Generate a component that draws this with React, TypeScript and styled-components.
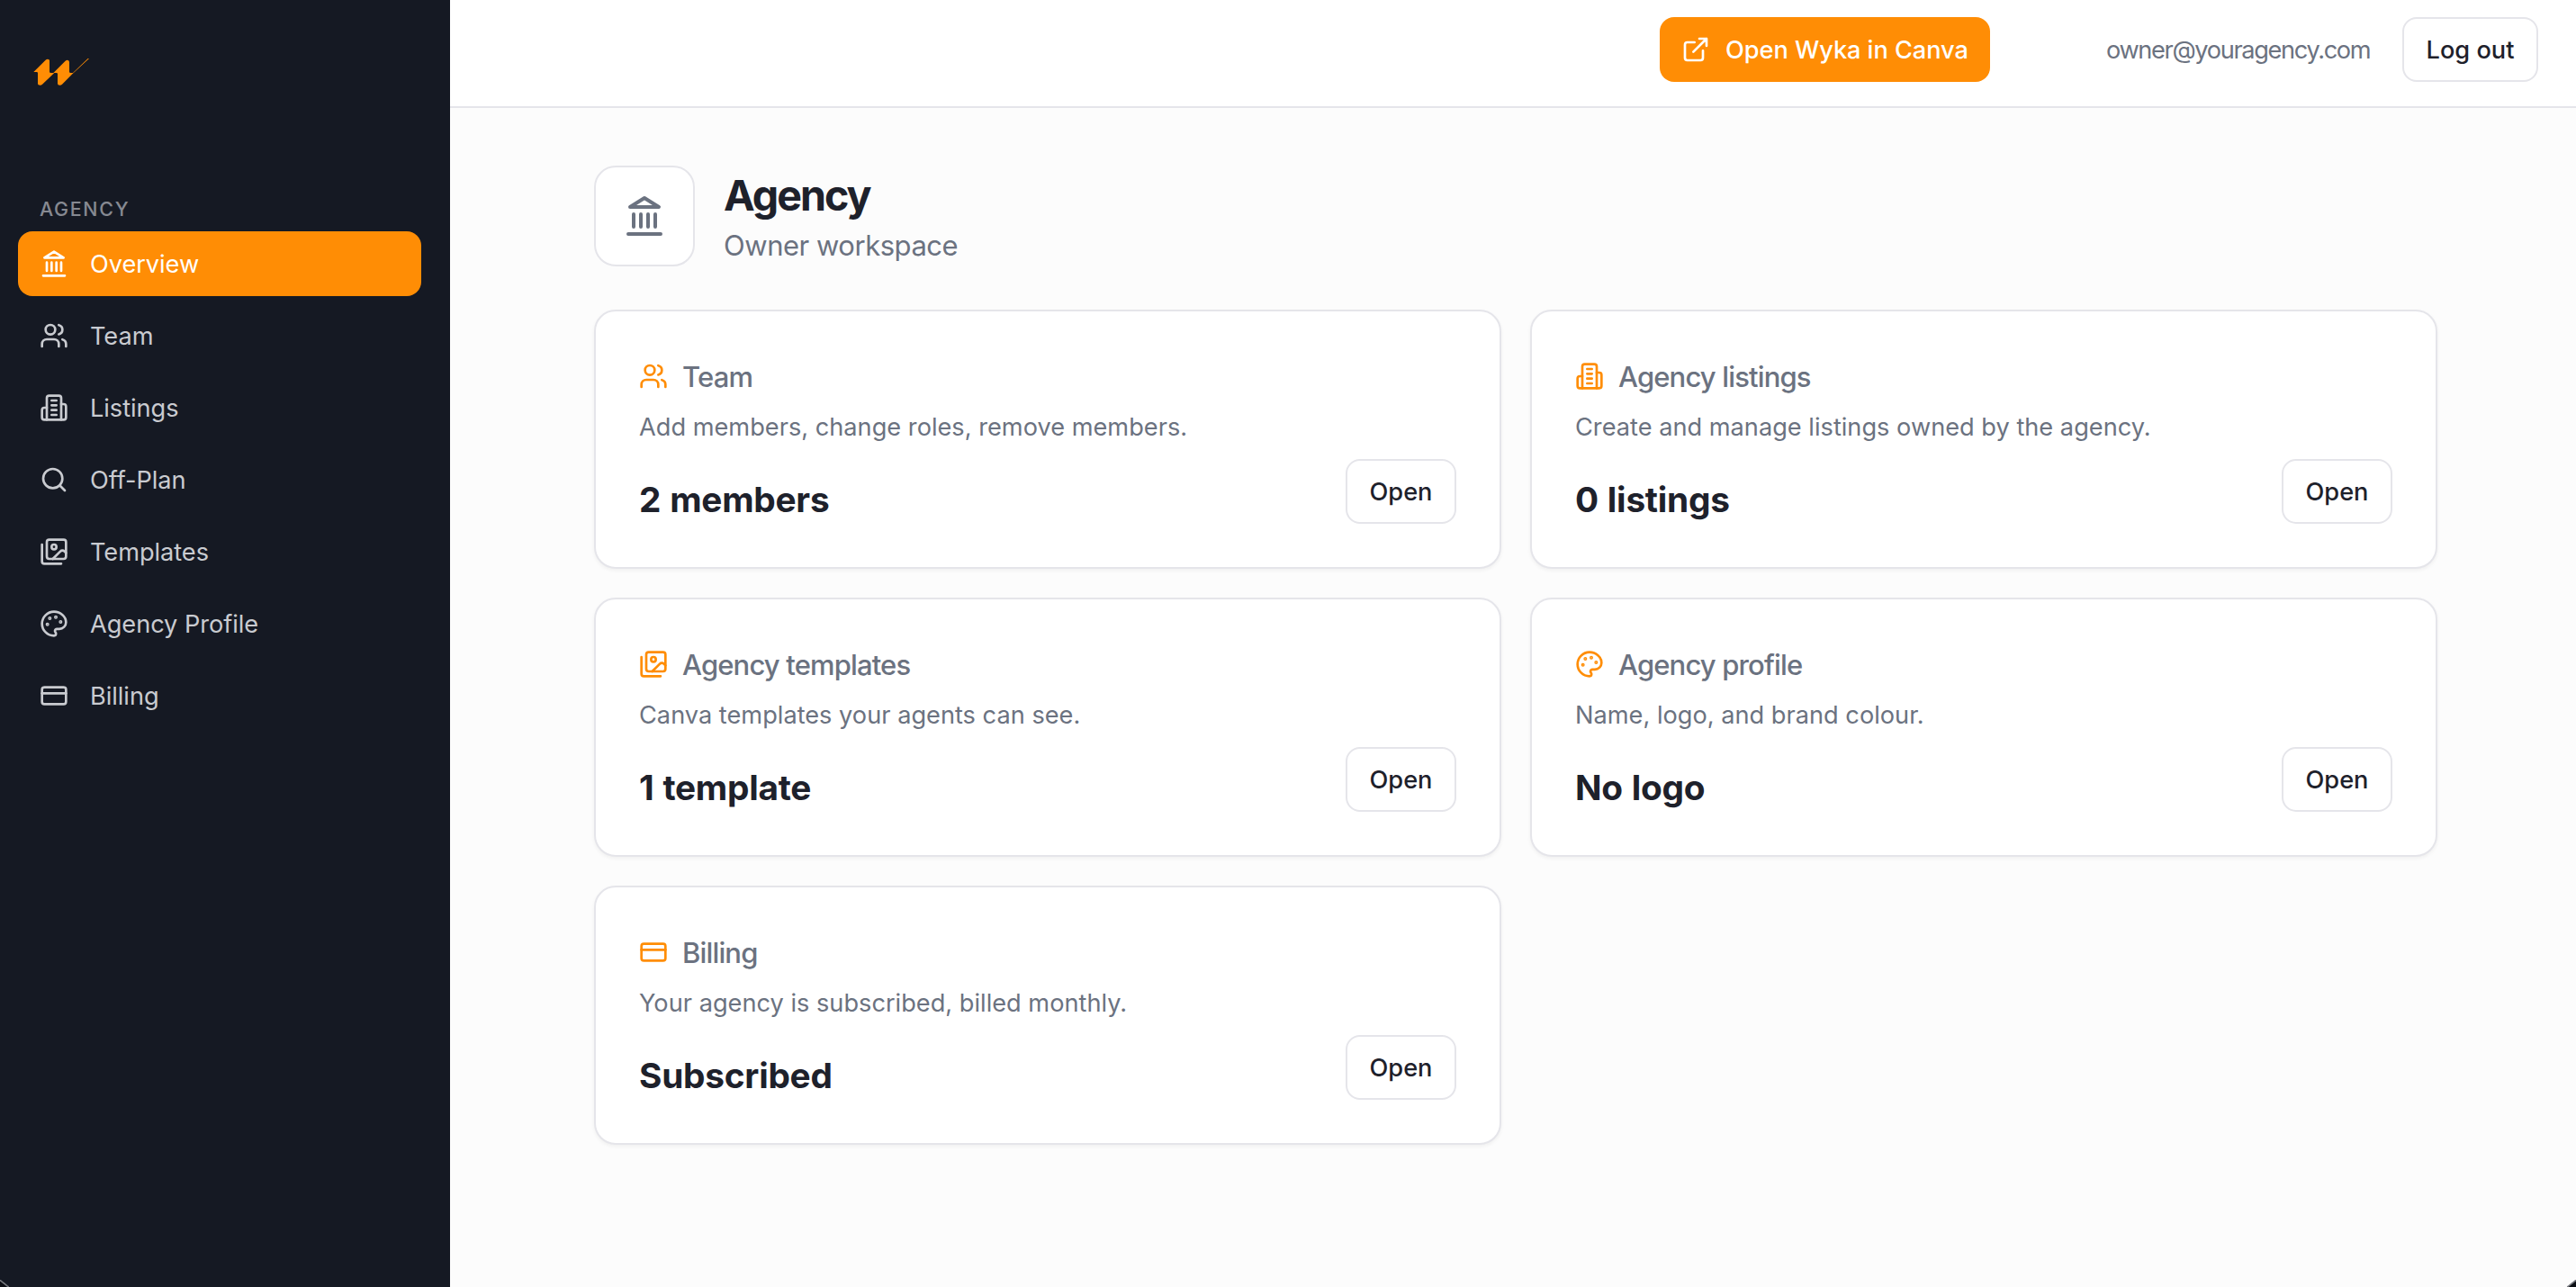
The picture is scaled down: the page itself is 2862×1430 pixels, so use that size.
import React from "react";
import styled, { createGlobalStyle } from "styled-components";

const c = {
  navy: "#151923",
  orange: "#ff8d05",
  ink: "#1e212b",
  muted: "#6b7280",
  line: "#e5e5ea",
  page: "#fcfcfc",
};

const GlobalStyle = createGlobalStyle`
  *, *::before, *::after { box-sizing: border-box; }
  body { margin: 0; background: ${c.page}; font-family: Inter, "Liberation Sans", sans-serif; color: ${c.ink}; }
  h1, h2, p { margin: 0; }
  button { font-family: inherit; }
`;

const Shell = styled.div`
  position: relative;
  display: flex;
  width: 100%;
  height: 100vh;
  overflow: hidden;
`;

const WindowCorner = styled.div<{ $side: "left" | "right" }>`
  position: absolute;
  bottom: 0;
  ${(p) => p.$side}: 0;
  width: 10px;
  height: 8px;
  background: linear-gradient(
    to top ${(p) => (p.$side === "left" ? "right" : "left")},
    #0c0e14 38%,
    #74767c 44%,
    #74767c 50%,
    transparent 58%
  );
`;

const Sidebar = styled.aside`
  flex: none;
  width: 500px;
  padding: 64px 32px 0 20px;
  background: ${c.navy};
`;

const Logo = styled.svg`
  display: block;
  width: 64px;
  height: 32px;
  margin-left: 16px;
`;

const GroupLabel = styled.div`
  margin: 120px 0 9px 24px;
  height: 32px;
  line-height: 32px;
  font-size: 21.4px;
  font-weight: 500;
  letter-spacing: 1.7px;
  color: #868991;
`;

const Nav = styled.nav`
  display: flex;
  flex-direction: column;
  gap: 8px;
`;

const Label = styled.span`
  padding-top: 1px;
  line-height: 33px;
`;

const NavItem = styled.a<{ $active?: boolean }>`
  display: flex;
  align-items: center;
  gap: 24px;
  height: 72px;
  padding: 0 24px;
  border-radius: 16px;
  font-size: 27.2px;
  letter-spacing: -0.05px;
  color: ${(p) => (p.$active ? "#fff" : "#c9cbd0")};
  background: ${(p) => (p.$active ? c.orange : "transparent")};
`;

const Glyph = styled.svg<{ $size?: number; $color?: string }>`
  flex: none;
  width: ${(p) => p.$size ?? 32}px;
  height: ${(p) => p.$size ?? 32}px;
  fill: none;
  color: ${(p) => p.$color ?? "inherit"};
  stroke: currentColor;
  stroke-width: 2;
  stroke-linecap: round;
  stroke-linejoin: round;
`;

const Column = styled.div`
  flex: 1;
  display: flex;
  flex-direction: column;
  min-width: 0;
  background: ${c.page};
`;

const TopBar = styled.header`
  display: flex;
  align-items: center;
  justify-content: flex-end;
  height: 120px;
  padding: 0 42px 8px 0;
  border-bottom: 2px solid ${c.line};
  background: #fff;
`;

const PrimaryButton = styled.button`
  display: flex;
  align-items: center;
  gap: 17px;
  width: 367px;
  height: 72px;
  padding: 0 0 0 24px;
  border: 0;
  border-radius: 16px;
  background: ${c.orange};
  color: #fff;
  font-size: 27.2px;
  font-weight: 500;
  letter-spacing: -0.05px;
  white-space: nowrap;
`;

const Email = styled.span`
  width: 294px;
  margin: 0 35px 0 129px;
  font-size: 27.2px;
  line-height: 33px;
  letter-spacing: -1.35px;
  color: ${c.muted};
  white-space: nowrap;
`;

const OutlineButton = styled.button<{ $width: number }>`
  display: flex;
  align-items: center;
  justify-content: center;
  flex: none;
  width: ${(p) => p.$width}px;
  height: 72px;
  padding: 0;
  border: 2px solid ${c.line};
  border-radius: 16px;
  background: #fff;
  color: ${c.ink};
  font-size: 27.2px;
  font-weight: 500;
`;

const Main = styled.main`
  flex: 1;
  padding: 64px 154px 0 160px;
`;

const PageHead = styled.div`
  display: flex;
  align-items: center;
  gap: 32px;
  height: 112px;
  margin-bottom: 48px;
`;

const HeadText = styled.div`
  padding-top: 2px;
`;

const HeadIcon = styled.div`
  display: grid;
  place-items: center;
  width: 112px;
  height: 112px;
  border: 2px solid ${c.line};
  border-radius: 24px;
  background: #fff;
  color: ${c.muted};
`;

const Title = styled.h1`
  font-size: 46.6px;
  line-height: 64px;
  font-weight: 700;
  letter-spacing: -2px;
`;

const Subtitle = styled.p`
  font-size: 31px;
  line-height: 48px;
  letter-spacing: -0.47px;
  color: ${c.muted};
`;

const Cards = styled.div`
  display: grid;
  grid-template-columns: 1fr 1fr;
  gap: 32px;
`;

const Card = styled.section`
  height: 288px;
  padding: 48px;
  border: 2px solid ${c.line};
  border-radius: 24px;
  background: #fff;
  box-shadow: 0 2px 4px rgba(0, 0, 0, 0.05);
`;

const CardTitle = styled.h2`
  display: flex;
  align-items: center;
  gap: 16px;
  height: 48px;
  font-size: 31px;
  line-height: 48px;
  font-weight: 500;
  letter-spacing: -0.85px;
  color: ${c.muted};
`;

const CardTitleText = styled.span`
  padding-top: 2px;
`;

const CardText = styled.p`
  height: 40px;
  margin-top: 12px;
  font-size: 27.2px;
  line-height: 41px;
  color: ${c.muted};
`;

const CardFoot = styled.div`
  display: flex;
  align-items: flex-end;
  justify-content: space-between;
  margin-top: 16px;
`;

const Value = styled.div`
  height: 56px;
  font-size: 38.8px;
  line-height: 57px;
  font-weight: 700;
  letter-spacing: -0.25px;
  word-spacing: 1px;
`;

const icons = {
  landmark: (
    <>
      <path d="M3 22h18M6 18v-7M10 18v-7M14 18v-7M18 18v-7" />
      <polygon points="12 2 20 7 4 7" />
    </>
  ),
  users: (
    <>
      <path d="M16 21v-2a4 4 0 0 0-4-4H6a4 4 0 0 0-4 4v2" />
      <circle cx="9" cy="7" r="4" />
      <path d="M22 21v-2a4 4 0 0 0-3-3.87M16 3.13a4 4 0 0 1 0 7.75" />
    </>
  ),
  building: (
    <>
      <path d="M6 22V4a2 2 0 0 1 2-2h8a2 2 0 0 1 2 2v18Z" />
      <path d="M6 12H4a2 2 0 0 0-2 2v6a2 2 0 0 0 2 2h2M18 9h2a2 2 0 0 1 2 2v9a2 2 0 0 1-2 2h-2" />
      <path d="M10 6h4M10 10h4M10 14h4M10 18h4" />
    </>
  ),
  search: (
    <>
      <circle cx="11" cy="11" r="8" />
      <path d="m21 21-4.3-4.3" />
    </>
  ),
  images: (
    <>
      <path d="M18 22H4a2 2 0 0 1-2-2V6" />
      <path d="m22 13-1.296-1.296a2.41 2.41 0 0 0-3.408 0L11 18" />
      <circle cx="12" cy="8" r="2" />
      <rect width="16" height="16" x="6" y="2" rx="2" />
    </>
  ),
  palette: (
    <>
      <circle cx="13.5" cy="6.5" r=".5" fill="currentColor" />
      <circle cx="17.5" cy="10.5" r=".5" fill="currentColor" />
      <circle cx="8.5" cy="7.5" r=".5" fill="currentColor" />
      <circle cx="6.5" cy="12.5" r=".5" fill="currentColor" />
      <path d="M12 2C6.5 2 2 6.5 2 12s4.5 10 10 10c.926 0 1.648-.746 1.648-1.688 0-.437-.18-.835-.437-1.125-.29-.289-.438-.652-.438-1.125a1.64 1.64 0 0 1 1.668-1.668h1.996c3.051 0 5.555-2.503 5.555-5.554C21.965 6.012 17.461 2 12 2z" />
    </>
  ),
  card: (
    <>
      <rect width="20" height="14" x="2" y="5" rx="2" />
      <path d="M2 10h20" />
    </>
  ),
  external: (
    <path d="M15 3h6v6M10 14 21 3M18 13v6a2 2 0 0 1-2 2H5a2 2 0 0 1-2-2V8a2 2 0 0 1 2-2h6" />
  ),
};

type IconName = keyof typeof icons;

function Icon({ name, size, color }: { name: IconName; size?: number; color?: string }) {
  return (
    <Glyph viewBox="0 0 24 24" $size={size} $color={color}>
      {icons[name]}
    </Glyph>
  );
}

const navItems: { icon: IconName; label: string }[] = [
  { icon: "landmark", label: "Overview" },
  { icon: "users", label: "Team" },
  { icon: "building", label: "Listings" },
  { icon: "search", label: "Off-Plan" },
  { icon: "images", label: "Templates" },
  { icon: "palette", label: "Agency Profile" },
  { icon: "card", label: "Billing" },
];

const cards: { icon: IconName; title: string; text: string; value: string }[] = [
  { icon: "users", title: "Team", text: "Add members, change roles, remove members.", value: "2 members" },
  { icon: "building", title: "Agency listings", text: "Create and manage listings owned by the agency.", value: "0 listings" },
  { icon: "images", title: "Agency templates", text: "Canva templates your agents can see.", value: "1 template" },
  { icon: "palette", title: "Agency profile", text: "Name, logo, and brand colour.", value: "No logo" },
  { icon: "card", title: "Billing", text: "Your agency is subscribed, billed monthly.", value: "Subscribed" },
];

export default function App() {
  return (
    <>
      <GlobalStyle />
      <Shell>
        <Sidebar>
          <Logo viewBox="108 102 192 96">
            <path
              fill={c.orange}
              d="M112 150L152 110Q155 107 159 107Q165 107 165 112V149Q165 153 170 153H178L217 114Q221 110 225 110Q231 111 231 117V149Q231 153 236 153H243L293 105H297L241 157L207 191Q204 194 199 194Q192 194 192 189V156Q192 153 188 153H181L141 191Q138 194 134 194Q126 194 126 190V154Q126 150 122 150Z"
            />
          </Logo>
          <GroupLabel>AGENCY</GroupLabel>
          <Nav>
            {navItems.map((n, i) => (
              <NavItem key={n.label} $active={i === 0}>
                <Icon name={n.icon} />
                <Label>{n.label}</Label>
              </NavItem>
            ))}
          </Nav>
        </Sidebar>
        <Column>
          <TopBar>
            <PrimaryButton>
              <Icon name="external" />
              <Label>Open Wyka in Canva</Label>
            </PrimaryButton>
            <Email>owner@youragency.com</Email>
            <OutlineButton $width={151}>
              <Label>Log out</Label>
            </OutlineButton>
          </TopBar>
          <Main>
            <PageHead>
              <HeadIcon>
                <Icon name="landmark" size={48} />
              </HeadIcon>
              <HeadText>
                <Title>Agency</Title>
                <Subtitle>Owner workspace</Subtitle>
              </HeadText>
            </PageHead>
            <Cards>
              {cards.map((k) => (
                <Card key={k.title}>
                  <CardTitle>
                    <Icon name={k.icon} color={c.orange} />
                    <CardTitleText>{k.title}</CardTitleText>
                  </CardTitle>
                  <CardText>{k.text}</CardText>
                  <CardFoot>
                    <Value>{k.value}</Value>
                    <OutlineButton $width={123}>
                      <Label>Open</Label>
                    </OutlineButton>
                  </CardFoot>
                </Card>
              ))}
            </Cards>
          </Main>
        </Column>
        <WindowCorner $side="left" />
        <WindowCorner $side="right" />
      </Shell>
    </>
  );
}
